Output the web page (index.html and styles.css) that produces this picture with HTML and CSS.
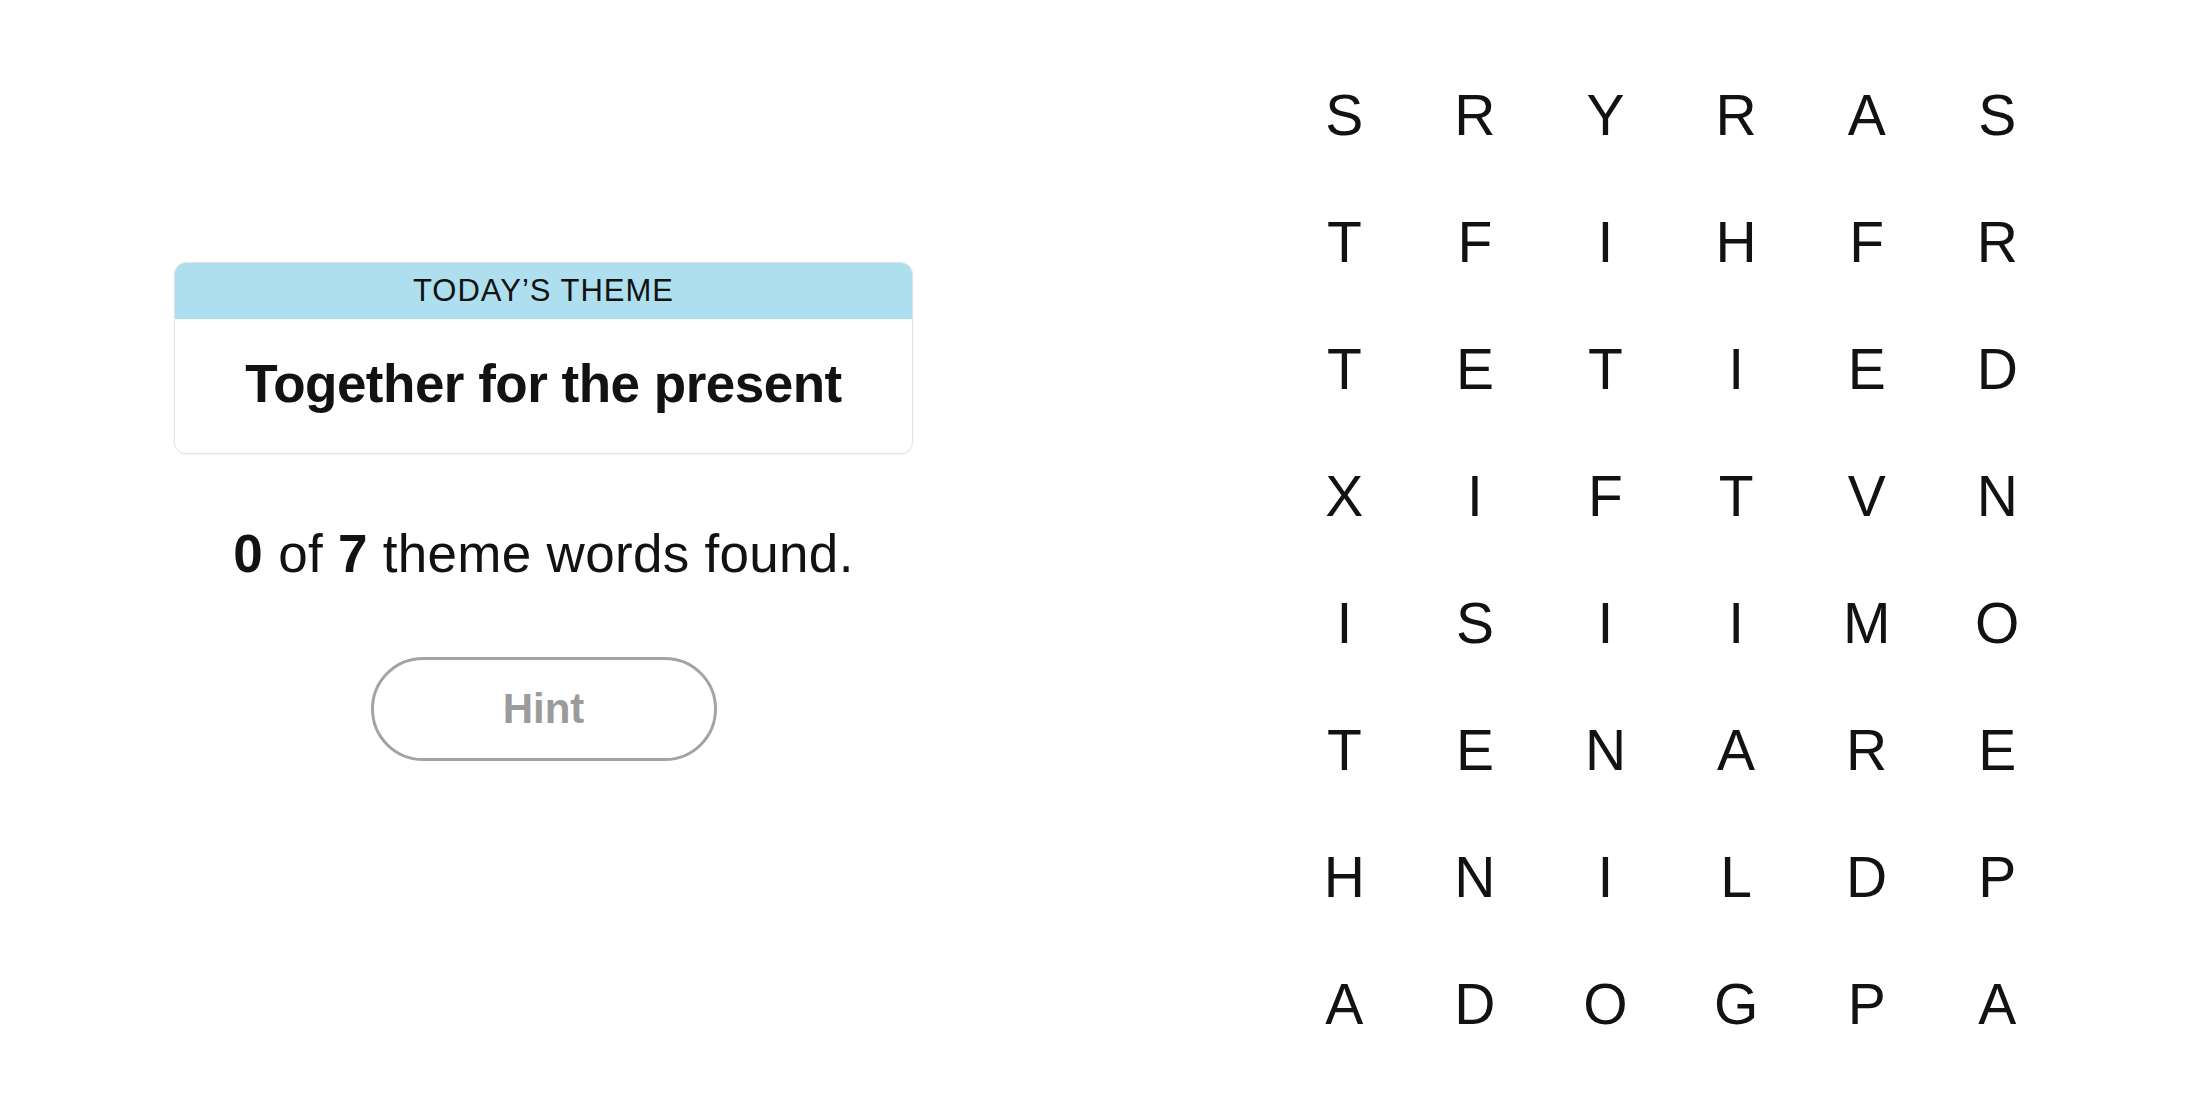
FILE: index.html
```html
<!DOCTYPE html>
<html lang="en">
<head>
<meta charset="utf-8">
<title>Strands</title>
<link rel="stylesheet" href="styles.css">
</head>
<body>
<main class="game">
  <section class="side">
    <div class="theme-card">
      <div class="theme-label">TODAY’S THEME</div>
      <div class="theme-title">Together for the present</div>
    </div>
    <p class="progress"><b>0</b> of <b>7</b> theme words found.</p>
    <button class="hint" type="button">Hint</button>
  </section>
  <section class="board">
    <span>S</span><span>R</span><span>Y</span><span>R</span><span>A</span><span>S</span>
    <span>T</span><span>F</span><span>I</span><span>H</span><span>F</span><span>R</span>
    <span>T</span><span>E</span><span>T</span><span>I</span><span>E</span><span>D</span>
    <span>X</span><span>I</span><span>F</span><span>T</span><span>V</span><span>N</span>
    <span>I</span><span>S</span><span>I</span><span>I</span><span>M</span><span>O</span>
    <span>T</span><span>E</span><span>N</span><span>A</span><span>R</span><span>E</span>
    <span>H</span><span>N</span><span>I</span><span>L</span><span>D</span><span>P</span>
    <span>A</span><span>D</span><span>O</span><span>G</span><span>P</span><span>A</span>
  </section>
</main>
</body>
</html>
```
FILE: styles.css
```css
* { box-sizing: border-box; }
html, body {
  margin: 0;
  background: #ffffff;
  color: #121212;
  font-family: "Liberation Sans", Arial, sans-serif;
}
.game {
  display: flex;
  align-items: flex-start;
  padding: 52px 0 0 174px;
  gap: 366px;
}
.side {
  width: 739px;
  padding-top: 210px;
  display: flex;
  flex-direction: column;
  align-items: center;
}
.theme-card {
  width: 739px;
  border: 1px solid #e2e2e2;
  border-radius: 12px;
  overflow: hidden;
  box-shadow: 0 1px 2px rgba(0,0,0,0.06);
}
.theme-label {
  height: 56px;
  background: #aedfee;
  display: flex;
  align-items: center;
  justify-content: center;
  font-size: 31px;
  letter-spacing: 1px;
  color: #121212;
}
.theme-title {
  height: 134px;
  display: flex;
  align-items: center;
  justify-content: center;
  font-size: 53px;
  font-weight: 700;
  letter-spacing: -0.5px;
  padding-bottom: 6px;
}
.progress {
  margin: 70px 0 0;
  font-size: 53px;
  line-height: 60px;
  letter-spacing: 0.3px;
}
.progress b { font-weight: 700; }
.hint {
  margin-top: 73px;
  width: 346px;
  height: 104px;
  border: 3px solid #a3a3a3;
  border-radius: 52px;
  background: #fff;
  color: #9b9b9b;
  font-family: "Liberation Sans", Arial, sans-serif;
  font-size: 42px;
  font-weight: 700;
  padding: 0;
}
.board {
  display: grid;
  grid-template-columns: repeat(6, 130.6px);
  grid-auto-rows: 127px;
  font-size: 57px;
  color: #121212;
}
.board span {
  display: flex;
  align-items: center;
  justify-content: center;
  line-height: 127px;
}
```
